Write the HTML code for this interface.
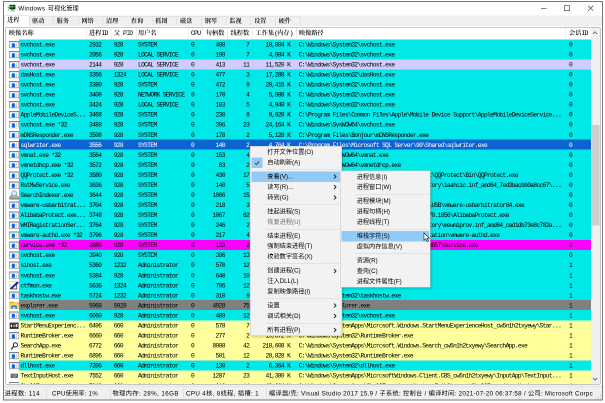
<!DOCTYPE html>
<html lang="zh-CN"><head><meta charset="utf-8"><title>Windows 可视化管理</title>
<style>
html,body{margin:0;padding:0;width:605px;height:403px;overflow:hidden;background:#fff}
#s{position:absolute;left:0;top:0;width:1210px;height:806px;transform:scale(.5);transform-origin:0 0;overflow:hidden;background:#fff;will-change:transform;
 font-family:"Liberation Sans","Noto Sans CJK SC",sans-serif;font-size:12.36px;color:#000}
#s div,#s span,#s svg{position:absolute;box-sizing:border-box;white-space:pre}
#s .in{position:static}
.mono{font-family:"Liberation Mono","Noto Serif CJK SC",monospace;font-size:12.4px;letter-spacing:-1.260px;-webkit-text-stroke:0.05px currentColor}
.song{font-family:"Liberation Serif","Noto Serif CJK SC",serif;font-size:12.36px;font-weight:600}
.r{height:20.07px;left:0;width:1210px;line-height:20.07px}
.r span{top:1.3px;height:20.07px}
.ra{text-align:right}
.ic{width:20px;height:20.07px;top:0}
.sel span{color:#fff}
.hd span{top:0px;line-height:23px;height:23px}
.hs{width:1px;background:#e0e0e0;top:0;height:23.6px}
.tab{top:33.4px;height:19.6px;background:#f0f0f0;border:1px solid #d6d6d6;border-bottom:none;text-align:center;line-height:17.6px}
.mi{left:2px;height:20.84px;line-height:20.84px}
.mi span{top:0}
.msep{height:1px;background:#d4d4d4}
.arr{width:8px;height:10px}
</style></head><body><div id="s">

<div style="left:6.00px;top:2.20px;width:1199.80px;height:799.20px;border:2px solid #787878;background:#f0f0f0"></div>
<div style="left:8.00px;top:4.20px;width:1195.80px;height:26.80px;background:#fff"></div>
<svg style="left:15.20px;top:9.20px;width:16.80px;height:14.00px" viewBox="0 0 17 14"><rect x="4" y="0.5" width="12" height="9" fill="#111" stroke="#9aa0a6" stroke-width="1"/><path d="M5 6 L7 3 L9 6.5 L11 2.5 L13 5 L15 4" stroke="#27d93a" stroke-width="1.8" fill="none"/><rect x="7.5" y="10" width="5" height="1.6" fill="#777"/><rect x="5.5" y="12" width="9" height="1.4" fill="#999"/><rect x="0.5" y="4" width="2.2" height="3" fill="#2fbf3f"/><rect x="0.8" y="8" width="1.6" height="4" fill="#8a8a8a"/></svg>
<div id="ttl1" style="left:36.80px;top:5.40px;height:24.00px;line-height:24.00px;letter-spacing:0.494px;">Windows</div>
<div id="ttl2" style="left:95.80px;top:5.40px;height:24.00px;line-height:24.00px;letter-spacing:-0.039px;">可视化管理</div>
<svg style="left:1072.00px;top:6.00px;width:124.00px;height:22.00px" viewBox="0 0 124 22"><path d="M10 11H21" stroke="#333" stroke-width="1.2"/><rect x="56.6" y="5.4" width="10.6" height="10" fill="none" stroke="#333" stroke-width="1.2"/><path d="M104 5.2L114.6 15.6M114.6 5.2L104 15.6" stroke="#333" stroke-width="1.2"/></svg>
<div class="tab song" style="left:8.00px;top:31.00px;width:51.10px;height:23.20px;background:#fff;line-height:17.4px;border-color:#d0d0d0;text-align:left;padding-left:5.40px">进程</div>
<div class="tab song" style="left:58.50px;width:49.32px;border-left:none;text-align:left;padding-left:5.50px">驱动</div>
<div class="tab song" style="left:107.82px;width:49.32px;border-left:none;text-align:left;padding-left:5.50px">服务</div>
<div class="tab song" style="left:157.14px;width:49.32px;border-left:none;text-align:left;padding-left:5.50px">网络</div>
<div class="tab song" style="left:206.46px;width:49.32px;border-left:none;text-align:left;padding-left:5.50px">清理</div>
<div class="tab song" style="left:255.78px;width:49.32px;border-left:none;text-align:left;padding-left:5.50px">查询</div>
<div class="tab song" style="left:305.10px;width:49.32px;border-left:none;text-align:left;padding-left:5.50px">抓图</div>
<div class="tab song" style="left:354.42px;width:49.32px;border-left:none;text-align:left;padding-left:5.50px">磁盘</div>
<div class="tab song" style="left:403.74px;width:49.32px;border-left:none;text-align:left;padding-left:5.50px">钢琴</div>
<div class="tab song" style="left:453.06px;width:49.32px;border-left:none;text-align:left;padding-left:5.50px">监视</div>
<div class="tab song" style="left:502.38px;width:49.32px;border-left:none;text-align:left;padding-left:5.50px">设置</div>
<div class="tab song" style="left:551.70px;width:49.32px;border-left:none;text-align:left;padding-left:5.50px">硬件</div>
<div style="left:8.00px;top:51.80px;width:1195.80px;height:718.60px;background:#fff"></div>
<div style="left:10.40px;top:54.00px;width:1190.80px;height:714.80px;border:1px solid #868b98;border-radius:3px;background:#fff"></div>
<div class="hd song" style="left:0;top:55.00px;width:1210px;height:23.6px">
<span style="left:18.00px">映像名称</span>
<span style="left:178.00px">进程<span class="in mono" style="font-weight:400;font-size:13px;letter-spacing:-1.62px">ID</span></span>
<span style="left:227.40px">父<span class="in mono" style="font-weight:400;font-size:13px;letter-spacing:-1.62px"> PID</span></span>
<span style="left:276.00px">用户名</span>
<span style="left:381.80px"><span class="in mono" style="font-weight:400;font-size:13px;letter-spacing:-1.62px">CPU</span></span>
<span style="left:411.60px">句柄数</span>
<span style="left:461.20px">线程数</span>
<span style="left:511.20px">工作集<span class="in mono" style="font-weight:400;font-size:13px;letter-spacing:-1.62px">(</span>内存<span class="in mono" style="font-weight:400;font-size:13px;letter-spacing:-1.62px">)</span></span>
<span style="left:598.00px">映像路径</span>
<span style="left:1138.00px">会话<span class="in mono" style="font-weight:400;font-size:13px;letter-spacing:-1.62px">ID</span></span>
<div class="hs" style="left:172.00px"></div>
<div class="hs" style="left:221.60px"></div>
<div class="hs" style="left:272.00px"></div>
<div class="hs" style="left:376.00px"></div>
<div class="hs" style="left:404.40px"></div>
<div class="hs" style="left:455.20px"></div>
<div class="hs" style="left:504.80px"></div>
<div class="hs" style="left:593.20px"></div>
<div class="hs" style="left:1130.80px"></div>
</div>
<div style="left:37.80px;top:78.60px;width:1144.20px;height:40.14px;background:#00e8e8"></div>
<div style="left:37.80px;top:118.74px;width:1144.20px;height:20.07px;background:#d0ccfc"></div>
<div style="left:37.80px;top:138.81px;width:1144.20px;height:140.49px;background:#00e8e8"></div>
<div style="left:37.80px;top:279.30px;width:1144.20px;height:20.07px;background:#0b64d0"></div>
<div style="left:37.80px;top:299.37px;width:1144.20px;height:180.63px;background:#00e8e8"></div>
<div style="left:37.80px;top:480.00px;width:1144.20px;height:20.07px;background:#ff00ff"></div>
<div style="left:37.80px;top:500.07px;width:1144.20px;height:100.35px;background:#00e8e8"></div>
<div style="left:37.80px;top:600.42px;width:1144.20px;height:20.07px;background:#808080"></div>
<div style="left:37.80px;top:620.49px;width:1144.20px;height:20.07px;background:#00e8e8"></div>
<div style="left:37.80px;top:640.56px;width:1144.20px;height:80.28px;background:#ffff9c"></div>
<div style="left:37.80px;top:720.84px;width:1144.20px;height:20.07px;background:#00e8e8"></div>
<div style="left:37.80px;top:740.91px;width:1144.20px;height:25.89px;background:#ffff9c"></div>
<div class="r mono" style="top:78.60px;height:20.07px;overflow:hidden">
<svg class="ic" style="left:17.50px" viewBox="0 0 20 20"><rect x="0.7" y="3.6" width="19" height="13" fill="#fdfdfd" stroke="#8c8c8c" stroke-width="1.3"/><rect x="0.7" y="3.3" width="19" height="1.6" fill="#7c7c7c"/><rect x="2" y="5.4" width="16.4" height="1.6" fill="#e4e4e4"/><rect x="5.6" y="7.4" width="6.2" height="8.4" rx="1.6" fill="#0c62e4"/><rect x="13.4" y="7.6" width="2.6" height="7.6" fill="#d2d0c4"/><rect x="2.4" y="7.6" width="2.2" height="7.6" fill="#eceff4"/></svg>
<span style="left:41.00px">svchost.exe</span><span style="left:178.00px">2932</span><span style="left:227.40px">928</span><span style="left:276.00px">SYSTEM</span><span style="left:382.00px">0</span><span class="ra" style="left:389.60px;width:60.00px">408</span><span class="ra" style="left:458.40px;width:40.00px">7</span><span class="ra" style="left:500.40px;width:80.00px">10,004 K</span><span style="left:597.40px">C:\Windows\System32\svchost.exe</span><span style="left:1138.00px">0</span>
</div>
<div class="r mono" style="top:98.67px;height:20.07px;overflow:hidden">
<svg class="ic" style="left:17.50px" viewBox="0 0 20 20"><rect x="0.7" y="3.6" width="19" height="13" fill="#fdfdfd" stroke="#8c8c8c" stroke-width="1.3"/><rect x="0.7" y="3.3" width="19" height="1.6" fill="#7c7c7c"/><rect x="2" y="5.4" width="16.4" height="1.6" fill="#e4e4e4"/><rect x="5.6" y="7.4" width="6.2" height="8.4" rx="1.6" fill="#0c62e4"/><rect x="13.4" y="7.6" width="2.6" height="7.6" fill="#d2d0c4"/><rect x="2.4" y="7.6" width="2.2" height="7.6" fill="#eceff4"/></svg>
<span style="left:41.00px">svchost.exe</span><span style="left:178.00px">2056</span><span style="left:227.40px">928</span><span style="left:276.00px">LOCAL SERVICE</span><span style="left:382.00px">0</span><span class="ra" style="left:389.60px;width:60.00px">199</span><span class="ra" style="left:458.40px;width:40.00px">7</span><span class="ra" style="left:500.40px;width:80.00px">4,984 K</span><span style="left:597.40px">C:\Windows\System32\svchost.exe</span><span style="left:1138.00px">0</span>
</div>
<div class="r mono" style="top:118.74px;height:20.07px;overflow:hidden">
<svg class="ic" style="left:17.50px" viewBox="0 0 20 20"><rect x="0.7" y="3.6" width="19" height="13" fill="#fdfdfd" stroke="#8c8c8c" stroke-width="1.3"/><rect x="0.7" y="3.3" width="19" height="1.6" fill="#7c7c7c"/><rect x="2" y="5.4" width="16.4" height="1.6" fill="#e4e4e4"/><rect x="5.6" y="7.4" width="6.2" height="8.4" rx="1.6" fill="#0c62e4"/><rect x="13.4" y="7.6" width="2.6" height="7.6" fill="#d2d0c4"/><rect x="2.4" y="7.6" width="2.2" height="7.6" fill="#eceff4"/></svg>
<span style="left:41.00px">svchost.exe</span><span style="left:178.00px">2144</span><span style="left:227.40px">928</span><span style="left:276.00px">LOCAL SERVICE</span><span style="left:382.00px">0</span><span class="ra" style="left:389.60px;width:60.00px">413</span><span class="ra" style="left:458.40px;width:40.00px">11</span><span class="ra" style="left:500.40px;width:80.00px">11,520 K</span><span style="left:597.40px">C:\Windows\System32\svchost.exe</span><span style="left:1138.00px">0</span>
</div>
<div class="r mono" style="top:138.81px;height:20.07px;overflow:hidden">
<svg class="ic" style="left:17.50px" viewBox="0 0 20 20"><rect x="0.7" y="3.6" width="19" height="13" fill="#fdfdfd" stroke="#8c8c8c" stroke-width="1.3"/><rect x="0.7" y="3.3" width="19" height="1.6" fill="#7c7c7c"/><rect x="2" y="5.4" width="16.4" height="1.6" fill="#e4e4e4"/><rect x="5.6" y="7.4" width="6.2" height="8.4" rx="1.6" fill="#0c62e4"/><rect x="13.4" y="7.6" width="2.6" height="7.6" fill="#d2d0c4"/><rect x="2.4" y="7.6" width="2.2" height="7.6" fill="#eceff4"/></svg>
<span style="left:41.00px">dasHost.exe</span><span style="left:178.00px">3356</span><span style="left:227.40px">1324</span><span style="left:276.00px">LOCAL SERVICE</span><span style="left:382.00px">0</span><span class="ra" style="left:389.60px;width:60.00px">477</span><span class="ra" style="left:458.40px;width:40.00px">3</span><span class="ra" style="left:500.40px;width:80.00px">17,288 K</span><span style="left:597.40px">C:\Windows\System32\dasHost.exe</span><span style="left:1138.00px">0</span>
</div>
<div class="r mono" style="top:158.88px;height:20.07px;overflow:hidden">
<svg class="ic" style="left:17.50px" viewBox="0 0 20 20"><rect x="0.7" y="3.6" width="19" height="13" fill="#fdfdfd" stroke="#8c8c8c" stroke-width="1.3"/><rect x="0.7" y="3.3" width="19" height="1.6" fill="#7c7c7c"/><rect x="2" y="5.4" width="16.4" height="1.6" fill="#e4e4e4"/><rect x="5.6" y="7.4" width="6.2" height="8.4" rx="1.6" fill="#0c62e4"/><rect x="13.4" y="7.6" width="2.6" height="7.6" fill="#d2d0c4"/><rect x="2.4" y="7.6" width="2.2" height="7.6" fill="#eceff4"/></svg>
<span style="left:41.00px">svchost.exe</span><span style="left:178.00px">3380</span><span style="left:227.40px">928</span><span style="left:276.00px">SYSTEM</span><span style="left:382.00px">0</span><span class="ra" style="left:389.60px;width:60.00px">472</span><span class="ra" style="left:458.40px;width:40.00px">9</span><span class="ra" style="left:500.40px;width:80.00px">20,416 K</span><span style="left:597.40px">C:\Windows\System32\svchost.exe</span><span style="left:1138.00px">0</span>
</div>
<div class="r mono" style="top:178.95px;height:20.07px;overflow:hidden">
<svg class="ic" style="left:17.50px" viewBox="0 0 20 20"><rect x="0.7" y="3.6" width="19" height="13" fill="#fdfdfd" stroke="#8c8c8c" stroke-width="1.3"/><rect x="0.7" y="3.3" width="19" height="1.6" fill="#7c7c7c"/><rect x="2" y="5.4" width="16.4" height="1.6" fill="#e4e4e4"/><rect x="5.6" y="7.4" width="6.2" height="8.4" rx="1.6" fill="#0c62e4"/><rect x="13.4" y="7.6" width="2.6" height="7.6" fill="#d2d0c4"/><rect x="2.4" y="7.6" width="2.2" height="7.6" fill="#eceff4"/></svg>
<span style="left:41.00px">svchost.exe</span><span style="left:178.00px">3408</span><span style="left:227.40px">928</span><span style="left:276.00px">NETWORK SERVICE</span><span style="left:382.00px">0</span><span class="ra" style="left:389.60px;width:60.00px">170</span><span class="ra" style="left:458.40px;width:40.00px">4</span><span class="ra" style="left:500.40px;width:80.00px">5,988 K</span><span style="left:597.40px">C:\Windows\System32\svchost.exe</span><span style="left:1138.00px">0</span>
</div>
<div class="r mono" style="top:199.02px;height:20.07px;overflow:hidden">
<svg class="ic" style="left:17.50px" viewBox="0 0 20 20"><rect x="0.7" y="3.6" width="19" height="13" fill="#fdfdfd" stroke="#8c8c8c" stroke-width="1.3"/><rect x="0.7" y="3.3" width="19" height="1.6" fill="#7c7c7c"/><rect x="2" y="5.4" width="16.4" height="1.6" fill="#e4e4e4"/><rect x="5.6" y="7.4" width="6.2" height="8.4" rx="1.6" fill="#0c62e4"/><rect x="13.4" y="7.6" width="2.6" height="7.6" fill="#d2d0c4"/><rect x="2.4" y="7.6" width="2.2" height="7.6" fill="#eceff4"/></svg>
<span style="left:41.00px">svchost.exe</span><span style="left:178.00px">3424</span><span style="left:227.40px">928</span><span style="left:276.00px">LOCAL SERVICE</span><span style="left:382.00px">0</span><span class="ra" style="left:389.60px;width:60.00px">183</span><span class="ra" style="left:458.40px;width:40.00px">5</span><span class="ra" style="left:500.40px;width:80.00px">4,940 K</span><span style="left:597.40px">C:\Windows\System32\svchost.exe</span><span style="left:1138.00px">0</span>
</div>
<div class="r mono" style="top:219.09px;height:20.07px;overflow:hidden">
<svg class="ic" style="left:17.50px" viewBox="0 0 20 20"><rect x="0.7" y="3.6" width="19" height="13" fill="#fdfdfd" stroke="#8c8c8c" stroke-width="1.3"/><rect x="0.7" y="3.3" width="19" height="1.6" fill="#7c7c7c"/><rect x="2" y="5.4" width="16.4" height="1.6" fill="#e4e4e4"/><rect x="5.6" y="7.4" width="6.2" height="8.4" rx="1.6" fill="#0c62e4"/><rect x="13.4" y="7.6" width="2.6" height="7.6" fill="#d2d0c4"/><rect x="2.4" y="7.6" width="2.2" height="7.6" fill="#eceff4"/></svg>
<span style="left:41.00px">AppleMobileDeviceS...</span><span style="left:178.00px">3468</span><span style="left:227.40px">928</span><span style="left:276.00px">SYSTEM</span><span style="left:382.00px">0</span><span class="ra" style="left:389.60px;width:60.00px">230</span><span class="ra" style="left:458.40px;width:40.00px">8</span><span class="ra" style="left:500.40px;width:80.00px">9,920 K</span><span style="left:597.40px">C:\Program Files\Common Files\Apple\Mobile Device Support\AppleMobileDeviceService...</span><span style="left:1138.00px">0</span>
</div>
<div class="r mono" style="top:239.16px;height:20.07px;overflow:hidden">
<svg class="ic" style="left:17.50px" viewBox="0 0 20 20"><rect x="0.7" y="3.6" width="19" height="13" fill="#fdfdfd" stroke="#8c8c8c" stroke-width="1.3"/><rect x="0.7" y="3.3" width="19" height="1.6" fill="#7c7c7c"/><rect x="2" y="5.4" width="16.4" height="1.6" fill="#e4e4e4"/><rect x="5.6" y="7.4" width="6.2" height="8.4" rx="1.6" fill="#0c62e4"/><rect x="13.4" y="7.6" width="2.6" height="7.6" fill="#d2d0c4"/><rect x="2.4" y="7.6" width="2.2" height="7.6" fill="#eceff4"/></svg>
<span style="left:41.00px">svchost.exe *32</span><span style="left:178.00px">3488</span><span style="left:227.40px">928</span><span style="left:276.00px">SYSTEM</span><span style="left:382.00px">0</span><span class="ra" style="left:389.60px;width:60.00px">396</span><span class="ra" style="left:458.40px;width:40.00px">23</span><span class="ra" style="left:500.40px;width:80.00px">24,164 K</span><span style="left:597.40px">C:\Windows\SysWOW64\svchost.exe</span><span style="left:1138.00px">0</span>
</div>
<div class="r mono" style="top:259.23px;height:20.07px;overflow:hidden">
<svg class="ic" style="left:17.50px" viewBox="0 0 20 20"><rect x="0.7" y="3.6" width="19" height="13" fill="#fdfdfd" stroke="#8c8c8c" stroke-width="1.3"/><rect x="0.7" y="3.3" width="19" height="1.6" fill="#7c7c7c"/><rect x="2" y="5.4" width="16.4" height="1.6" fill="#e4e4e4"/><rect x="5.6" y="7.4" width="6.2" height="8.4" rx="1.6" fill="#0c62e4"/><rect x="13.4" y="7.6" width="2.6" height="7.6" fill="#d2d0c4"/><rect x="2.4" y="7.6" width="2.2" height="7.6" fill="#eceff4"/></svg>
<span style="left:41.00px">mDNSResponder.exe</span><span style="left:178.00px">3508</span><span style="left:227.40px">928</span><span style="left:276.00px">SYSTEM</span><span style="left:382.00px">0</span><span class="ra" style="left:389.60px;width:60.00px">178</span><span class="ra" style="left:458.40px;width:40.00px">2</span><span class="ra" style="left:500.40px;width:80.00px">5,128 K</span><span style="left:597.40px">C:\Program Files\Bonjour\mDNSResponder.exe</span><span style="left:1138.00px">0</span>
</div>
<div class="r mono sel" style="top:279.30px;height:20.07px;overflow:hidden">
<svg class="ic" style="left:17.50px" viewBox="0 0 20 20"><rect x="0.7" y="3.6" width="19" height="13" fill="#fdfdfd" stroke="#8c8c8c" stroke-width="1.3"/><rect x="0.7" y="3.3" width="19" height="1.6" fill="#7c7c7c"/><rect x="2" y="5.4" width="16.4" height="1.6" fill="#e4e4e4"/><rect x="5.6" y="7.4" width="6.2" height="8.4" rx="1.6" fill="#0c62e4"/><rect x="13.4" y="7.6" width="2.6" height="7.6" fill="#d2d0c4"/><rect x="2.4" y="7.6" width="2.2" height="7.6" fill="#eceff4"/></svg>
<span style="left:41.00px">sqlwriter.exe</span><span style="left:178.00px">3556</span><span style="left:227.40px">928</span><span style="left:276.00px">SYSTEM</span><span style="left:382.00px">0</span><span class="ra" style="left:389.60px;width:60.00px">140</span><span class="ra" style="left:458.40px;width:40.00px">2</span><span class="ra" style="left:500.40px;width:80.00px">4,764 K</span><span style="left:597.40px">C:\Program Files\Microsoft SQL Server\90\Shared\sqlwriter.exe</span><span style="left:1138.00px">0</span>
</div>
<div class="r mono" style="top:299.37px;height:20.07px;overflow:hidden">
<svg class="ic" style="left:17.50px" viewBox="0 0 20 20"><rect x="0.7" y="3.6" width="19" height="13" fill="#fdfdfd" stroke="#8c8c8c" stroke-width="1.3"/><rect x="0.7" y="3.3" width="19" height="1.6" fill="#7c7c7c"/><rect x="2" y="5.4" width="16.4" height="1.6" fill="#e4e4e4"/><rect x="5.6" y="7.4" width="6.2" height="8.4" rx="1.6" fill="#0c62e4"/><rect x="13.4" y="7.6" width="2.6" height="7.6" fill="#d2d0c4"/><rect x="2.4" y="7.6" width="2.2" height="7.6" fill="#eceff4"/></svg>
<span style="left:41.00px">vmnat.exe *32</span><span style="left:178.00px">3564</span><span style="left:227.40px">928</span><span style="left:276.00px">SYSTEM</span><span style="left:382.00px">0</span><span class="ra" style="left:389.60px;width:60.00px">153</span><span class="ra" style="left:458.40px;width:40.00px">4</span><span class="ra" style="left:500.40px;width:80.00px">5,756 K</span><span style="left:597.40px">C:\Windows\SysWOW64\vmnat.exe</span><span style="left:1138.00px">0</span>
</div>
<div class="r mono" style="top:319.44px;height:20.07px;overflow:hidden">
<svg class="ic" style="left:17.50px" viewBox="0 0 20 20"><rect x="0.7" y="3.6" width="19" height="13" fill="#fdfdfd" stroke="#8c8c8c" stroke-width="1.3"/><rect x="0.7" y="3.3" width="19" height="1.6" fill="#7c7c7c"/><rect x="2" y="5.4" width="16.4" height="1.6" fill="#e4e4e4"/><rect x="5.6" y="7.4" width="6.2" height="8.4" rx="1.6" fill="#0c62e4"/><rect x="13.4" y="7.6" width="2.6" height="7.6" fill="#d2d0c4"/><rect x="2.4" y="7.6" width="2.2" height="7.6" fill="#eceff4"/></svg>
<span style="left:41.00px">vmnetdhcp.exe *32</span><span style="left:178.00px">3572</span><span style="left:227.40px">928</span><span style="left:276.00px">SYSTEM</span><span style="left:382.00px">0</span><span class="ra" style="left:389.60px;width:60.00px">83</span><span class="ra" style="left:458.40px;width:40.00px">2</span><span class="ra" style="left:500.40px;width:80.00px">3,892 K</span><span style="left:597.40px">C:\Windows\SysWOW64\vmnetdhcp.exe</span><span style="left:1138.00px">0</span>
</div>
<div class="r mono" style="top:339.51px;height:20.07px;overflow:hidden">
<svg class="ic" style="left:17.50px" viewBox="0 0 20 20"><rect x="0.7" y="3.6" width="19" height="13" fill="#fdfdfd" stroke="#8c8c8c" stroke-width="1.3"/><rect x="0.7" y="3.3" width="19" height="1.6" fill="#7c7c7c"/><rect x="2" y="5.4" width="16.4" height="1.6" fill="#e4e4e4"/><rect x="5.6" y="7.4" width="6.2" height="8.4" rx="1.6" fill="#0c62e4"/><rect x="13.4" y="7.6" width="2.6" height="7.6" fill="#d2d0c4"/><rect x="2.4" y="7.6" width="2.2" height="7.6" fill="#eceff4"/></svg>
<span style="left:41.00px">QQProtect.exe *32</span><span style="left:178.00px">3580</span><span style="left:227.40px">928</span><span style="left:276.00px">SYSTEM</span><span style="left:382.00px">0</span><span class="ra" style="left:389.60px;width:60.00px">430</span><span class="ra" style="left:458.40px;width:40.00px">17</span><span class="ra" style="left:500.40px;width:80.00px">18,112 K</span><span style="left:597.40px">C:\Program Files (x86)\Common Files\Tencent\QQProtect\Bin\QQProtect.exe</span><span style="left:1138.00px">0</span>
</div>
<div class="r mono" style="top:359.58px;height:20.07px;overflow:hidden">
<svg class="ic" style="left:17.50px" viewBox="0 0 20 20"><rect x="0.7" y="3.6" width="19" height="13" fill="#fdfdfd" stroke="#8c8c8c" stroke-width="1.3"/><rect x="0.7" y="3.3" width="19" height="1.6" fill="#7c7c7c"/><rect x="2" y="5.4" width="16.4" height="1.6" fill="#e4e4e4"/><rect x="5.6" y="7.4" width="6.2" height="8.4" rx="1.6" fill="#0c62e4"/><rect x="13.4" y="7.6" width="2.6" height="7.6" fill="#d2d0c4"/><rect x="2.4" y="7.6" width="2.2" height="7.6" fill="#eceff4"/></svg>
<span style="left:41.00px">RstMwService.exe</span><span style="left:178.00px">3636</span><span style="left:227.40px">928</span><span style="left:276.00px">SYSTEM</span><span style="left:382.00px">0</span><span class="ra" style="left:389.60px;width:60.00px">140</span><span class="ra" style="left:458.40px;width:40.00px">5</span><span class="ra" style="left:500.40px;width:80.00px">6,220 K</span><span style="left:597.40px">C:\Windows\System32\DriverStore\FileRepository\iaahcic.inf_amd64_7ed3bacbb0a8cc67\...</span><span style="left:1138.00px">0</span>
</div>
<div class="r mono" style="top:379.65px;height:20.07px;overflow:hidden">
<svg class="ic" style="left:17.50px" viewBox="0 0 20 20"><path d="M1 14.5 L3.5 11.5 H17 L19.6 14.5 V18.6 H1 Z" fill="#b9bec6" stroke="#6a707a" stroke-width="1"/><rect x="1.4" y="15" width="17.8" height="3.4" fill="#8a909a"/><circle cx="16.6" cy="16.6" r="1.5" fill="#28c83c"/><circle cx="10.4" cy="6.6" r="5.2" fill="#d6ebff" stroke="#8e98a6" stroke-width="1.6"/><path d="M6.4 10.4 L3 14" stroke="#7a828e" stroke-width="2.2"/></svg>
<span style="left:41.00px">SearchIndexer.exe</span><span style="left:178.00px">3644</span><span style="left:227.40px">928</span><span style="left:276.00px">SYSTEM</span><span style="left:382.00px">0</span><span class="ra" style="left:389.60px;width:60.00px">1006</span><span class="ra" style="left:458.40px;width:40.00px">15</span><span class="ra" style="left:500.40px;width:80.00px">42,316 K</span><span style="left:597.40px">C:\Windows\System32\SearchIndexer.exe</span><span style="left:1138.00px">0</span>
</div>
<div class="r mono" style="top:399.72px;height:20.07px;overflow:hidden">
<svg class="ic" style="left:17.50px" viewBox="0 0 20 20"><rect x="0.7" y="3.6" width="19" height="13" fill="#fdfdfd" stroke="#8c8c8c" stroke-width="1.3"/><rect x="0.7" y="3.3" width="19" height="1.6" fill="#7c7c7c"/><rect x="2" y="5.4" width="16.4" height="1.6" fill="#e4e4e4"/><rect x="5.6" y="7.4" width="6.2" height="8.4" rx="1.6" fill="#0c62e4"/><rect x="13.4" y="7.6" width="2.6" height="7.6" fill="#d2d0c4"/><rect x="2.4" y="7.6" width="2.2" height="7.6" fill="#eceff4"/></svg>
<span style="left:41.00px">vmware-usbarbitrat...</span><span style="left:178.00px">3704</span><span style="left:227.40px">928</span><span style="left:276.00px">SYSTEM</span><span style="left:382.00px">0</span><span class="ra" style="left:389.60px;width:60.00px">218</span><span class="ra" style="left:458.40px;width:40.00px">3</span><span class="ra" style="left:500.40px;width:80.00px">8,664 K</span><span style="left:597.40px">C:\Program Files (x86)\Common Files\VMware\USB\vmware-usbarbitrator64.exe</span><span style="left:1138.00px">0</span>
</div>
<div class="r mono" style="top:419.79px;height:20.07px;overflow:hidden">
<svg class="ic" style="left:17.50px" viewBox="0 0 20 20"><rect x="0.7" y="3.6" width="19" height="13" fill="#fdfdfd" stroke="#8c8c8c" stroke-width="1.3"/><rect x="0.7" y="3.3" width="19" height="1.6" fill="#7c7c7c"/><rect x="2" y="5.4" width="16.4" height="1.6" fill="#e4e4e4"/><rect x="5.6" y="7.4" width="6.2" height="8.4" rx="1.6" fill="#0c62e4"/><rect x="13.4" y="7.6" width="2.6" height="7.6" fill="#d2d0c4"/><rect x="2.4" y="7.6" width="2.2" height="7.6" fill="#eceff4"/></svg>
<span style="left:41.00px">AlibabaProtect.exe...</span><span style="left:178.00px">3748</span><span style="left:227.40px">928</span><span style="left:276.00px">SYSTEM</span><span style="left:382.00px">0</span><span class="ra" style="left:389.60px;width:60.00px">1067</span><span class="ra" style="left:458.40px;width:40.00px">62</span><span class="ra" style="left:500.40px;width:80.00px">36,480 K</span><span style="left:597.40px">C:\Program Files (x86)\AlibabaProtect\1.0.70.1056\AlibabaProtect.exe</span><span style="left:1138.00px">0</span>
</div>
<div class="r mono" style="top:439.86px;height:20.07px;overflow:hidden">
<svg class="ic" style="left:17.50px" viewBox="0 0 20 20"><rect x="0.7" y="3.6" width="19" height="13" fill="#fdfdfd" stroke="#8c8c8c" stroke-width="1.3"/><rect x="0.7" y="3.3" width="19" height="1.6" fill="#7c7c7c"/><rect x="2" y="5.4" width="16.4" height="1.6" fill="#e4e4e4"/><rect x="5.6" y="7.4" width="6.2" height="8.4" rx="1.6" fill="#0c62e4"/><rect x="13.4" y="7.6" width="2.6" height="7.6" fill="#d2d0c4"/><rect x="2.4" y="7.6" width="2.2" height="7.6" fill="#eceff4"/></svg>
<span style="left:41.00px">WMIRegistrationSer...</span><span style="left:178.00px">3764</span><span style="left:227.40px">928</span><span style="left:276.00px">SYSTEM</span><span style="left:382.00px">0</span><span class="ra" style="left:389.60px;width:60.00px">246</span><span class="ra" style="left:458.40px;width:40.00px">2</span><span class="ra" style="left:500.40px;width:80.00px">9,112 K</span><span style="left:597.40px">C:\Windows\System32\DriverStore\FileRepository\mewmiprov.inf_amd64_cad1db73e8c782a...</span><span style="left:1138.00px">0</span>
</div>
<div class="r mono" style="top:459.93px;height:20.07px;overflow:hidden">
<svg class="ic" style="left:17.50px" viewBox="0 0 20 20"><rect x="0.7" y="3.6" width="19" height="13" fill="#fdfdfd" stroke="#8c8c8c" stroke-width="1.3"/><rect x="0.7" y="3.3" width="19" height="1.6" fill="#7c7c7c"/><rect x="2" y="5.4" width="16.4" height="1.6" fill="#e4e4e4"/><rect x="5.6" y="7.4" width="6.2" height="8.4" rx="1.6" fill="#0c62e4"/><rect x="13.4" y="7.6" width="2.6" height="7.6" fill="#d2d0c4"/><rect x="2.4" y="7.6" width="2.2" height="7.6" fill="#eceff4"/></svg>
<span style="left:41.00px">vmware-authd.exe *32</span><span style="left:178.00px">3796</span><span style="left:227.40px">928</span><span style="left:276.00px">SYSTEM</span><span style="left:382.00px">0</span><span class="ra" style="left:389.60px;width:60.00px">217</span><span class="ra" style="left:458.40px;width:40.00px">4</span><span class="ra" style="left:500.40px;width:80.00px">11,748 K</span><span style="left:597.40px">C:\Program Files (x86)\VMware\VMware Workstation\vmware-authd.exe</span><span style="left:1138.00px">0</span>
</div>
<div class="r mono" style="top:480.00px;height:20.07px;overflow:hidden">
<svg class="ic" style="left:17.50px" viewBox="0 0 20 20"><rect x="0.7" y="3.6" width="19" height="13" fill="#fdfdfd" stroke="#8c8c8c" stroke-width="1.3"/><rect x="0.7" y="3.3" width="19" height="1.6" fill="#7c7c7c"/><rect x="2" y="5.4" width="16.4" height="1.6" fill="#e4e4e4"/><rect x="5.6" y="7.4" width="6.2" height="8.4" rx="1.6" fill="#0c62e4"/><rect x="13.4" y="7.6" width="2.6" height="7.6" fill="#d2d0c4"/><rect x="2.4" y="7.6" width="2.2" height="7.6" fill="#eceff4"/></svg>
<span style="left:41.00px">service.exe *32</span><span style="left:178.00px">3880</span><span style="left:227.40px">928</span><span style="left:276.00px">SYSTEM</span><span style="left:382.00px">0</span><span class="ra" style="left:389.60px;width:60.00px">133</span><span class="ra" style="left:458.40px;width:40.00px">2</span><span class="ra" style="left:500.40px;width:80.00px">7,236 K</span><span style="left:597.40px">C:\Program Files (x86)\Tencent\QQPCMgr\13.6857\service.exe</span><span style="left:1138.00px">0</span>
</div>
<div class="r mono" style="top:500.07px;height:20.07px;overflow:hidden">
<svg class="ic" style="left:17.50px" viewBox="0 0 20 20"><rect x="0.7" y="3.6" width="19" height="13" fill="#fdfdfd" stroke="#8c8c8c" stroke-width="1.3"/><rect x="0.7" y="3.3" width="19" height="1.6" fill="#7c7c7c"/><rect x="2" y="5.4" width="16.4" height="1.6" fill="#e4e4e4"/><rect x="5.6" y="7.4" width="6.2" height="8.4" rx="1.6" fill="#0c62e4"/><rect x="13.4" y="7.6" width="2.6" height="7.6" fill="#d2d0c4"/><rect x="2.4" y="7.6" width="2.2" height="7.6" fill="#eceff4"/></svg>
<span style="left:41.00px">svchost.exe</span><span style="left:178.00px">3940</span><span style="left:227.40px">928</span><span style="left:276.00px">SYSTEM</span><span style="left:382.00px">0</span><span class="ra" style="left:389.60px;width:60.00px">396</span><span class="ra" style="left:458.40px;width:40.00px">13</span><span class="ra" style="left:500.40px;width:80.00px">15,204 K</span><span style="left:597.40px">C:\Windows\System32\svchost.exe</span><span style="left:1138.00px">0</span>
</div>
<div class="r mono" style="top:520.14px;height:20.07px;overflow:hidden">
<svg class="ic" style="left:17.50px" viewBox="0 0 20 20"><rect x="0.7" y="3.6" width="19" height="13" fill="#fdfdfd" stroke="#8c8c8c" stroke-width="1.3"/><rect x="0.7" y="3.3" width="19" height="1.6" fill="#7c7c7c"/><rect x="2" y="5.4" width="16.4" height="1.6" fill="#e4e4e4"/><rect x="5.6" y="7.4" width="6.2" height="8.4" rx="1.6" fill="#0c62e4"/><rect x="13.4" y="7.6" width="2.6" height="7.6" fill="#d2d0c4"/><rect x="2.4" y="7.6" width="2.2" height="7.6" fill="#eceff4"/></svg>
<span style="left:41.00px">sihost.exe</span><span style="left:178.00px">5360</span><span style="left:227.40px">1232</span><span style="left:276.00px">Administrator</span><span style="left:382.00px">0</span><span class="ra" style="left:389.60px;width:60.00px">570</span><span class="ra" style="left:458.40px;width:40.00px">12</span><span class="ra" style="left:500.40px;width:80.00px">27,540 K</span><span style="left:597.40px">C:\Windows\System32\sihost.exe</span><span style="left:1138.00px">1</span>
</div>
<div class="r mono" style="top:540.21px;height:20.07px;overflow:hidden">
<svg class="ic" style="left:17.50px" viewBox="0 0 20 20"><rect x="0.7" y="3.6" width="19" height="13" fill="#fdfdfd" stroke="#8c8c8c" stroke-width="1.3"/><rect x="0.7" y="3.3" width="19" height="1.6" fill="#7c7c7c"/><rect x="2" y="5.4" width="16.4" height="1.6" fill="#e4e4e4"/><rect x="5.6" y="7.4" width="6.2" height="8.4" rx="1.6" fill="#0c62e4"/><rect x="13.4" y="7.6" width="2.6" height="7.6" fill="#d2d0c4"/><rect x="2.4" y="7.6" width="2.2" height="7.6" fill="#eceff4"/></svg>
<span style="left:41.00px">svchost.exe</span><span style="left:178.00px">5384</span><span style="left:227.40px">928</span><span style="left:276.00px">Administrator</span><span style="left:382.00px">0</span><span class="ra" style="left:389.60px;width:60.00px">640</span><span class="ra" style="left:458.40px;width:40.00px">10</span><span class="ra" style="left:500.40px;width:80.00px">30,016 K</span><span style="left:597.40px">C:\Windows\System32\svchost.exe</span><span style="left:1138.00px">1</span>
</div>
<div class="r mono" style="top:560.28px;height:20.07px;overflow:hidden">
<svg class="ic" style="left:17.50px" viewBox="0 0 20 20"><path d="M1.6 3 H15 V17.6 H1.6 Z" fill="#fbfbfb" stroke="#b8b8b8" stroke-width="1"/><path d="M1.6 17.8 H15.4 V8" fill="none" stroke="#4a4a4a" stroke-width="1.6"/><path d="M3.6 15.6 L16.4 3.2 L19.4 5.6 L6.4 17 Z" fill="#1d28c8" stroke="#101470" stroke-width="0.9"/><path d="M1.8 17.6 L3.8 14.8 L6.2 16.8 Z" fill="#222"/></svg>
<span style="left:41.00px">ctfmon.exe</span><span style="left:178.00px">5636</span><span style="left:227.40px">1324</span><span style="left:276.00px">Administrator</span><span style="left:382.00px">0</span><span class="ra" style="left:389.60px;width:60.00px">706</span><span class="ra" style="left:458.40px;width:40.00px">12</span><span class="ra" style="left:500.40px;width:80.00px">22,908 K</span><span style="left:597.40px">C:\Windows\System32\ctfmon.exe</span><span style="left:1138.00px">1</span>
</div>
<div class="r mono" style="top:580.35px;height:20.07px;overflow:hidden">
<svg class="ic" style="left:17.50px" viewBox="0 0 20 20"><rect x="0.7" y="3.6" width="19" height="13" fill="#fdfdfd" stroke="#8c8c8c" stroke-width="1.3"/><rect x="0.7" y="3.3" width="19" height="1.6" fill="#7c7c7c"/><rect x="2" y="5.4" width="16.4" height="1.6" fill="#e4e4e4"/><rect x="5.6" y="7.4" width="6.2" height="8.4" rx="1.6" fill="#0c62e4"/><rect x="13.4" y="7.6" width="2.6" height="7.6" fill="#d2d0c4"/><rect x="2.4" y="7.6" width="2.2" height="7.6" fill="#eceff4"/></svg>
<span style="left:41.00px">taskhostw.exe</span><span style="left:178.00px">5724</span><span style="left:227.40px">1232</span><span style="left:276.00px">Administrator</span><span style="left:382.00px">0</span><span class="ra" style="left:389.60px;width:60.00px">310</span><span class="ra" style="left:458.40px;width:40.00px">9</span><span class="ra" style="left:500.40px;width:80.00px">16,392 K</span><span style="left:597.40px">C:\Windows\System32\taskhostw.exe</span><span style="left:1138.00px">1</span>
</div>
<div class="r mono" style="top:600.42px;height:20.07px;overflow:hidden">
<svg class="ic" style="left:17.50px" viewBox="0 0 20 20"><path d="M0.6 3 H8.4 L10 5 H20 V17.4 H0.6 Z" fill="#e9a820"/><path d="M0.6 6.4 H20 V17.6 H0.6 Z" fill="#fcd462"/><path d="M4.4 17.8 V12.4 Q4.4 10.8 6 10.8 H14.2 Q15.8 10.8 15.8 12.4 V17.8 H12.6 V14 H7.6 V17.8 Z" fill="#1e86e6"/></svg>
<span style="left:41.00px">explorer.exe</span><span style="left:178.00px">5968</span><span style="left:227.40px">5928</span><span style="left:276.00px">Administrator</span><span style="left:382.00px">0</span><span class="ra" style="left:389.60px;width:60.00px">4928</span><span class="ra" style="left:458.40px;width:40.00px">75</span><span class="ra" style="left:500.40px;width:80.00px">196,448 K</span><span style="left:597.40px">C:\Windows\explorer.exe</span><span style="left:1138.00px">1</span>
</div>
<div class="r mono" style="top:620.49px;height:20.07px;overflow:hidden">
<svg class="ic" style="left:17.50px" viewBox="0 0 20 20"><rect x="0.7" y="3.6" width="19" height="13" fill="#fdfdfd" stroke="#8c8c8c" stroke-width="1.3"/><rect x="0.7" y="3.3" width="19" height="1.6" fill="#7c7c7c"/><rect x="2" y="5.4" width="16.4" height="1.6" fill="#e4e4e4"/><rect x="5.6" y="7.4" width="6.2" height="8.4" rx="1.6" fill="#0c62e4"/><rect x="13.4" y="7.6" width="2.6" height="7.6" fill="#d2d0c4"/><rect x="2.4" y="7.6" width="2.2" height="7.6" fill="#eceff4"/></svg>
<span style="left:41.00px">svchost.exe</span><span style="left:178.00px">6060</span><span style="left:227.40px">928</span><span style="left:276.00px">Administrator</span><span style="left:382.00px">0</span><span class="ra" style="left:389.60px;width:60.00px">489</span><span class="ra" style="left:458.40px;width:40.00px">12</span><span class="ra" style="left:500.40px;width:80.00px">21,876 K</span><span style="left:597.40px">C:\Windows\System32\svchost.exe</span><span style="left:1138.00px">1</span>
</div>
<div class="r mono" style="top:640.56px;height:20.07px;overflow:hidden">
<svg class="ic" style="left:17.50px" viewBox="0 0 20 20"><rect x="1.4" y="4.2" width="17.6" height="12.4" fill="#141414"/><rect x="3.4" y="8" width="3" height="5.6" fill="#f4f4f4"/><rect x="8" y="8.4" width="4.6" height="5" fill="#8c8c8c"/><rect x="13.4" y="7" width="3.6" height="6.4" fill="#e2e2e2"/><rect x="3" y="5.4" width="14" height="1.2" fill="#6a6a6a"/></svg>
<span style="left:41.00px">StartMenuExperienc...</span><span style="left:178.00px">6496</span><span style="left:227.40px">660</span><span style="left:276.00px">Administrator</span><span style="left:382.00px">0</span><span class="ra" style="left:389.60px;width:60.00px">578</span><span class="ra" style="left:458.40px;width:40.00px">7</span><span class="ra" style="left:500.40px;width:80.00px">62,804 K</span><span style="left:597.40px">C:\Windows\SystemApps\Microsoft.Windows.StartMenuExperienceHost_cw5n1h2txyewy\Star...</span><span style="left:1138.00px">1</span>
</div>
<div class="r mono" style="top:660.63px;height:20.07px;overflow:hidden">
<svg class="ic" style="left:17.50px" viewBox="0 0 20 20"><rect x="0.7" y="3.6" width="19" height="13" fill="#fdfdfd" stroke="#8c8c8c" stroke-width="1.3"/><rect x="0.7" y="3.3" width="19" height="1.6" fill="#7c7c7c"/><rect x="2" y="5.4" width="16.4" height="1.6" fill="#e4e4e4"/><rect x="5.6" y="7.4" width="6.2" height="8.4" rx="1.6" fill="#0c62e4"/><rect x="13.4" y="7.6" width="2.6" height="7.6" fill="#d2d0c4"/><rect x="2.4" y="7.6" width="2.2" height="7.6" fill="#eceff4"/></svg>
<span style="left:41.00px">RuntimeBroker.exe</span><span style="left:178.00px">6660</span><span style="left:227.40px">660</span><span style="left:276.00px">Administrator</span><span style="left:382.00px">0</span><span class="ra" style="left:389.60px;width:60.00px">277</span><span class="ra" style="left:458.40px;width:40.00px">2</span><span class="ra" style="left:500.40px;width:80.00px">19,672 K</span><span style="left:597.40px">C:\Windows\System32\RuntimeBroker.exe</span><span style="left:1138.00px">1</span>
</div>
<div class="r mono" style="top:680.70px;height:20.07px;overflow:hidden">
<svg class="ic" style="left:17.50px" viewBox="0 0 20 20"><circle cx="12.8" cy="8.6" r="4.2" fill="none" stroke="#1c1c1c" stroke-width="1.9"/><path d="M9.8 11.8 L4.4 17.6" stroke="#1c1c1c" stroke-width="2.3"/></svg>
<span style="left:41.00px">SearchApp.exe</span><span style="left:178.00px">6772</span><span style="left:227.40px">660</span><span style="left:276.00px">Administrator</span><span style="left:382.00px">0</span><span class="ra" style="left:389.60px;width:60.00px">8008</span><span class="ra" style="left:458.40px;width:40.00px">42</span><span class="ra" style="left:500.40px;width:80.00px">218,608 K</span><span style="left:597.40px">C:\Windows\SystemApps\Microsoft.Windows.Search_cw5n1h2txyewy\SearchApp.exe</span><span style="left:1138.00px">1</span>
</div>
<div class="r mono" style="top:700.77px;height:20.07px;overflow:hidden">
<svg class="ic" style="left:17.50px" viewBox="0 0 20 20"><rect x="0.7" y="3.6" width="19" height="13" fill="#fdfdfd" stroke="#8c8c8c" stroke-width="1.3"/><rect x="0.7" y="3.3" width="19" height="1.6" fill="#7c7c7c"/><rect x="2" y="5.4" width="16.4" height="1.6" fill="#e4e4e4"/><rect x="5.6" y="7.4" width="6.2" height="8.4" rx="1.6" fill="#0c62e4"/><rect x="13.4" y="7.6" width="2.6" height="7.6" fill="#d2d0c4"/><rect x="2.4" y="7.6" width="2.2" height="7.6" fill="#eceff4"/></svg>
<span style="left:41.00px">RuntimeBroker.exe</span><span style="left:178.00px">6896</span><span style="left:227.40px">660</span><span style="left:276.00px">Administrator</span><span style="left:382.00px">0</span><span class="ra" style="left:389.60px;width:60.00px">501</span><span class="ra" style="left:458.40px;width:40.00px">12</span><span class="ra" style="left:500.40px;width:80.00px">28,828 K</span><span style="left:597.40px">C:\Windows\System32\RuntimeBroker.exe</span><span style="left:1138.00px">1</span>
</div>
<div class="r mono" style="top:720.84px;height:20.07px;overflow:hidden">
<svg class="ic" style="left:17.50px" viewBox="0 0 20 20"><rect x="0.7" y="3.6" width="19" height="13" fill="#fdfdfd" stroke="#8c8c8c" stroke-width="1.3"/><rect x="0.7" y="3.3" width="19" height="1.6" fill="#7c7c7c"/><rect x="2" y="5.4" width="16.4" height="1.6" fill="#e4e4e4"/><rect x="5.6" y="7.4" width="6.2" height="8.4" rx="1.6" fill="#0c62e4"/><rect x="13.4" y="7.6" width="2.6" height="7.6" fill="#d2d0c4"/><rect x="2.4" y="7.6" width="2.2" height="7.6" fill="#eceff4"/></svg>
<span style="left:41.00px">dllhost.exe</span><span style="left:178.00px">7396</span><span style="left:227.40px">660</span><span style="left:276.00px">Administrator</span><span style="left:382.00px">0</span><span class="ra" style="left:389.60px;width:60.00px">130</span><span class="ra" style="left:458.40px;width:40.00px">2</span><span class="ra" style="left:500.40px;width:80.00px">6,364 K</span><span style="left:597.40px">C:\Windows\System32\dllhost.exe</span><span style="left:1138.00px">1</span>
</div>
<div class="r mono" style="top:740.91px;height:20.07px;overflow:hidden">
<svg class="ic" style="left:17.50px" viewBox="0 0 20 20"><rect x="3.4" y="6.4" width="14.2" height="7.6" rx="1" fill="#3c3c3c"/><path d="M5 8.6H16M5 10.6H16" stroke="#f2f2f2" stroke-width="1.2" stroke-dasharray="1.5 0.9"/><rect x="6.4" y="12.2" width="8" height="1" fill="#dcdcdc"/><rect x="3.4" y="14" width="14.2" height="1.2" fill="#9a9a9a"/></svg>
<span style="left:41.00px">TextInputHost.exe</span><span style="left:178.00px">7552</span><span style="left:227.40px">660</span><span style="left:276.00px">Administrator</span><span style="left:382.00px">0</span><span class="ra" style="left:389.60px;width:60.00px">1287</span><span class="ra" style="left:458.40px;width:40.00px">23</span><span class="ra" style="left:500.40px;width:80.00px">41,380 K</span><span style="left:597.40px">C:\Windows\SystemApps\MicrosoftWindows.Client.CBS_cw5n1h2txyewy\InputApp\TextInput...</span><span style="left:1138.00px">1</span>
</div>
<div class="r mono" style="top:760.98px;height:5.82px;overflow:hidden">
<svg class="ic" style="left:17.50px" viewBox="0 0 20 20"><rect x="0.7" y="3.6" width="19" height="13" fill="#fdfdfd" stroke="#8c8c8c" stroke-width="1.3"/><rect x="0.7" y="3.3" width="19" height="1.6" fill="#7c7c7c"/><rect x="2" y="5.4" width="16.4" height="1.6" fill="#e4e4e4"/><rect x="5.6" y="7.4" width="6.2" height="8.4" rx="1.6" fill="#0c62e4"/><rect x="13.4" y="7.6" width="2.6" height="7.6" fill="#d2d0c4"/><rect x="2.4" y="7.6" width="2.2" height="7.6" fill="#eceff4"/></svg>
<span style="left:41.00px">ShellExperienceHost...</span><span style="left:178.00px">7640</span><span style="left:227.40px">660</span><span style="left:276.00px">Administrator</span><span style="left:382.00px">0</span><span class="ra" style="left:389.60px;width:60.00px">612</span><span class="ra" style="left:458.40px;width:40.00px">14</span><span class="ra" style="left:500.40px;width:80.00px">48,224 K</span><span style="left:597.40px">C:\Windows\SystemApps\ShellExperienceHost_cw5n1h2txyewy\ShellExperienceHost.exe</span><span style="left:1138.00px">1</span>
</div>
<div style="left:1182.00px;top:55.00px;width:18.20px;height:712.80px;background:#f0f0f0"></div>
<div style="left:1182.80px;top:250.40px;width:16.00px;height:201.00px;background:#cdcdcd"></div>
<svg style="left:1184.80px;top:62.00px;width:10.00px;height:6.80px" viewBox="0 0 10 7"><path d="M1 6L5 1.6L9 6" stroke="#505050" stroke-width="1.6" fill="none"/></svg>
<svg style="left:1184.80px;top:754.80px;width:10.00px;height:6.80px" viewBox="0 0 10 7"><path d="M1 1L5 5.4L9 1" stroke="#505050" stroke-width="1.6" fill="none"/></svg>
<div style="left:8.00px;top:772.00px;width:1195.80px;height:1px;background:#dadada"></div>
<div id="st1" style="left:9.60px;top:774.60px;height:24.00px;line-height:24.00px;letter-spacing:0.843px;">进程数: 114</div>
<div id="st2" style="left:104.00px;top:774.60px;height:24.00px;line-height:24.00px;letter-spacing:0.409px;">CPU使用率: 1%</div>
<div id="st3" style="left:225.00px;top:774.60px;height:24.00px;line-height:24.00px;letter-spacing:0.899px;">物理内存: 28%, 16GB</div>
<div id="st4" style="left:372.00px;top:774.60px;height:24.00px;line-height:24.00px;letter-spacing:0.747px;">CPU 4核, 8线程, 插槽: 1</div>
<div id="st5" style="left:538.00px;top:774.60px;height:24.00px;line-height:24.00px;letter-spacing:0.624px;">编译器/壳: Visual Studio 2017 15.9 / 子系统: 控制台 / 编译时间: 2021-07-20 06:37:58 / 公司: Microsoft Corpc</div>
<div style="left:92.60px;top:776.80px;width:1px;height:20.80px;background:#d0d0d0"></div>
<div style="left:221.00px;top:776.80px;width:1px;height:20.80px;background:#d0d0d0"></div>
<div style="left:367.00px;top:776.80px;width:1px;height:20.80px;background:#d0d0d0"></div>
<div style="left:532.00px;top:776.80px;width:1px;height:20.80px;background:#d0d0d0"></div>
<svg style="left:1191.20px;top:788.00px;width:12.00px;height:12.00px" viewBox="0 0 12 12"><g fill="#bfbfbf"><rect x="9" y="1" width="2" height="2"/><rect x="9" y="5" width="2" height="2"/><rect x="9" y="9" width="2" height="2"/><rect x="5" y="5" width="2" height="2"/><rect x="5" y="9" width="2" height="2"/><rect x="1" y="9" width="2" height="2"/></g></svg>
<div style="left:500.00px;top:291.60px;width:184.00px;height:380.40px;background:#f2f2f2;border:1px solid #c4c4c4;box-shadow:3px 3px 4px rgba(0,0,0,.16)">
<div class="mi" style="top:1.60px;width:178.00px;">
<span style="left:31.60px;">打开文件位置(O)</span>
</div>
<div class="mi" style="top:22.44px;width:178.00px;">
<div style="left:0;top:0;width:22.40px;height:20.84px;background:#91c9f7"></div>
<svg style="left:5.20px;top:5.60px;width:12.00px;height:10.00px" viewBox="0 0 12 10"><path d="M1.5 5L4.6 8.2L10.5 1.5" stroke="#222" stroke-width="1.5" fill="none"/></svg>
<span style="left:31.60px;">自动刷新(A)</span>
</div>
<div class="msep" style="left:31.00px;top:46.46px;width:150.20px"></div>
<div class="mi" style="top:50.44px;width:178.00px;background:#91c9f7;">
<span style="left:31.60px;">查看(V)...</span>
<svg class="arr" style="left:162.80px;top:5.40px" viewBox="0 0 8 10"><path d="M2 1L6 5L2 9" stroke="#222" stroke-width="1.8" fill="none"/></svg>
</div>
<div class="mi" style="top:71.28px;width:178.00px;">
<span style="left:31.60px;">读写(R)...</span>
<svg class="arr" style="left:162.80px;top:5.40px" viewBox="0 0 8 10"><path d="M2 1L6 5L2 9" stroke="#222" stroke-width="1.8" fill="none"/></svg>
</div>
<div class="mi" style="top:92.12px;width:178.00px;">
<span style="left:31.60px;">转到(G)</span>
<svg class="arr" style="left:162.80px;top:5.40px" viewBox="0 0 8 10"><path d="M2 1L6 5L2 9" stroke="#222" stroke-width="1.8" fill="none"/></svg>
</div>
<div class="msep" style="left:31.00px;top:116.14px;width:150.20px"></div>
<div class="mi" style="top:120.12px;width:178.00px;">
<span style="left:31.60px;">挂起进程(S)</span>
</div>
<div class="mi" style="top:140.96px;width:178.00px;">
<span style="left:31.60px;color:#6d6d6d;">恢复进程(U)</span>
</div>
<div class="msep" style="left:31.00px;top:164.98px;width:150.20px"></div>
<div class="mi" style="top:168.96px;width:178.00px;">
<span style="left:31.60px;">结束进程(E)</span>
</div>
<div class="mi" style="top:189.80px;width:178.00px;">
<span style="left:31.60px;">强制结束进程(T)</span>
</div>
<div class="mi" style="top:210.64px;width:178.00px;">
<span style="left:31.60px;">校验数字签名(X)</span>
</div>
<div class="msep" style="left:31.00px;top:234.66px;width:150.20px"></div>
<div class="mi" style="top:238.64px;width:178.00px;">
<span style="left:31.60px;">创建进程(C)</span>
<svg class="arr" style="left:162.80px;top:5.40px" viewBox="0 0 8 10"><path d="M2 1L6 5L2 9" stroke="#222" stroke-width="1.8" fill="none"/></svg>
</div>
<div class="mi" style="top:259.48px;width:178.00px;">
<span style="left:31.60px;">注入DLL(L)</span>
</div>
<div class="mi" style="top:280.32px;width:178.00px;">
<span style="left:31.60px;">复制映像路径(I)</span>
</div>
<div class="msep" style="left:31.00px;top:304.34px;width:150.20px"></div>
<div class="mi" style="top:308.32px;width:178.00px;">
<span style="left:31.60px;">设置</span>
<svg class="arr" style="left:162.80px;top:5.40px" viewBox="0 0 8 10"><path d="M2 1L6 5L2 9" stroke="#222" stroke-width="1.8" fill="none"/></svg>
</div>
<div class="mi" style="top:329.16px;width:178.00px;">
<span style="left:31.60px;">调试相关(D)</span>
<svg class="arr" style="left:162.80px;top:5.40px" viewBox="0 0 8 10"><path d="M2 1L6 5L2 9" stroke="#222" stroke-width="1.8" fill="none"/></svg>
</div>
<div class="msep" style="left:31.00px;top:353.18px;width:150.20px"></div>
<div class="mi" style="top:357.16px;width:178.00px;">
<span style="left:31.60px;">所有进程(P)</span>
<svg class="arr" style="left:162.80px;top:5.40px" viewBox="0 0 8 10"><path d="M2 1L6 5L2 9" stroke="#222" stroke-width="1.8" fill="none"/></svg>
</div>
</div>
<div style="left:679.60px;top:341.00px;width:181.60px;height:233.88px;background:#f2f2f2;border:1px solid #c4c4c4;box-shadow:3px 3px 4px rgba(0,0,0,.16)">
<div class="mi" style="top:1.60px;width:175.60px;">
<span style="left:30.80px;">进程信息(I)</span>
</div>
<div class="mi" style="top:22.44px;width:175.60px;">
<span style="left:30.80px;">进程窗口(W)</span>
</div>
<div class="msep" style="left:30.20px;top:46.46px;width:148.60px"></div>
<div class="mi" style="top:50.44px;width:175.60px;">
<span style="left:30.80px;">进程模块(M)</span>
</div>
<div class="mi" style="top:71.28px;width:175.60px;">
<span style="left:30.80px;">进程句柄(H)</span>
</div>
<div class="mi" style="top:92.12px;width:175.60px;">
<span style="left:30.80px;">进程线程(T)</span>
</div>
<div class="msep" style="left:30.20px;top:116.14px;width:148.60px"></div>
<div class="mi" style="top:120.12px;width:175.60px;background:#91c9f7;">
<span style="left:30.80px;">堆栈字符(S)</span>
</div>
<div class="mi" style="top:140.96px;width:175.60px;">
<span style="left:30.80px;">虚拟内存信息(V)</span>
</div>
<div class="msep" style="left:30.20px;top:164.98px;width:148.60px"></div>
<div class="mi" style="top:168.96px;width:175.60px;">
<span style="left:30.80px;">资源(R)</span>
</div>
<div class="mi" style="top:189.80px;width:175.60px;">
<span style="left:30.80px;">查壳(C)</span>
</div>
<div class="mi" style="top:210.64px;width:175.60px;">
<span style="left:30.80px;">进程文件属性(F)</span>
</div>
</div>
<svg style="left:847.40px;top:465.20px;width:13.00px;height:19.50px" viewBox="0 0 14 21"><path d="M1 1V17L5 13.2L7.8 19.6L10.4 18.4L7.6 12.2H13Z" fill="#fff" stroke="#000" stroke-width="1.1"/></svg>
</div></body></html>
